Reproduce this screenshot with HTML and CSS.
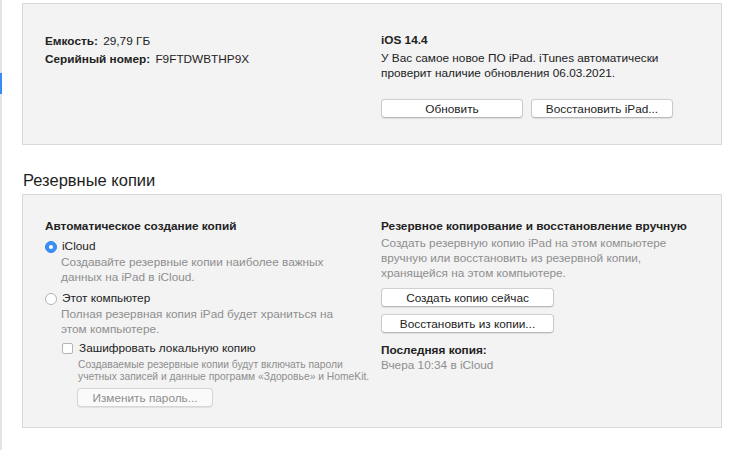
FILE: index.html
```html
<!DOCTYPE html>
<html lang="ru">
<head>
<meta charset="utf-8">
<link rel="stylesheet" href="styles.css">
</head>
<body>
<div class="app">
  <aside class="sidebar"><div class="sidebar-mark"></div></aside>
  <main class="main">
    <section class="panel panel-top">
      <div class="col col-left">
        <div class="kv"><b>Емкость:</b> 29,79 ГБ</div>
        <div class="kv"><b>Серийный номер:</b> F9FTDWBTHP9X</div>
      </div>
      <div class="col col-right">
        <div class="title">iOS 14.4</div>
        <p class="text">У Вас самое новое ПО iPad. iTunes автоматически проверит наличие обновления 06.03.2021.</p>
        <div class="btn-row">
          <button class="btn btn-wide">Обновить</button>
          <button class="btn btn-wide">Восстановить iPad...</button>
        </div>
      </div>
    </section>

    <h2 class="section-title">Резервные копии</h2>

    <section class="panel panel-backup">
      <div class="col col-left">
        <div class="title">Автоматическое создание копий</div>
        <label class="option">
          <span class="radio radio-on"></span><span>iCloud</span>
        </label>
        <p class="hint hint-indent">Создавайте резервные копии наиболее важных данных на iPad в iCloud.</p>
        <label class="option option-2">
          <span class="radio"></span><span>Этот компьютер</span>
        </label>
        <p class="hint hint-indent">Полная резервная копия iPad будет храниться на этом компьютере.</p>
        <label class="check">
          <span class="checkbox"></span><span>Зашифровать локальную копию</span>
        </label>
        <p class="small">Создаваемые резервные копии будут включать пароли<br>учетных записей и данные программ «Здоровье» и HomeKit.</p>
        <button class="btn btn-disabled">Изменить пароль...</button>
      </div>
      <div class="col col-right">
        <div class="title">Резервное копирование и восстановление вручную</div>
        <p class="hint hint-right">Создать резервную копию iPad на этом компьютере вручную или восстановить из резервной копии, хранящейся на этом компьютере.</p>
        <button class="btn btn-backup">Создать копию сейчас</button>
        <button class="btn btn-backup btn-second">Восстановить из копии...</button>
        <div class="title last-title">Последняя копия:</div>
        <div class="hint">Вчера 10:34 в iCloud</div>
      </div>
    </section>
  </main>
</div>
</body>
</html>
```

FILE: styles.css
```css
* { box-sizing: border-box; }
html, body {
  margin: 0;
  padding: 0;
  background: #ffffff;
}
body {
  font-family: "Liberation Sans", Arial, sans-serif;
  font-size: 11.8px;
  line-height: 15px;
  color: #222222;
  width: 740px;
  height: 450px;
  overflow: hidden;
}
.app {
  display: flex;
  height: 450px;
}
.sidebar {
  width: 2px;
  flex: 0 0 2px;
  background: #e6e2ea;
}
.sidebar-mark {
  margin-top: 73px;
  height: 21px;
  background: #3a8cf4;
}
.main {
  flex: 1;
  padding-left: 20px;
}
.panel {
  width: 700px;
  background: #f3f3f3;
  border: 1px solid #d8d8d8;
  display: grid;
  grid-template-columns: 336px 1fr;
  padding-left: 22px;
}
.panel-top {
  margin-top: 3px;
  height: 142px;
  padding-top: 29px;
}
.col { display: flex; flex-direction: column; align-items: flex-start; }
.kv {
  line-height: 17px;
  height: 17.5px;
  color: #222;
}
.kv b { font-weight: bold; margin-right: 2px; }
.title {
  font-weight: bold;
  color: #222;
}
.text {
  margin: 3px 0 0;
  width: 290px;
}
.btn-row {
  display: flex;
  gap: 8px;
  margin-top: 18px;
}
.btn {
  font-family: inherit;
  font-size: 11.8px;
  line-height: 16px;
  color: #222;
  background: #ffffff;
  border: 1px solid #c9c9c9;
  border-top-color: #d0d0d0;
  border-bottom-color: #b8b8b8;
  border-radius: 4px;
  height: 19px;
  padding: 0;
  box-shadow: 0 0.5px 1px rgba(0,0,0,0.08);
}
.btn-wide { width: 142px; }
.section-title {
  margin: 25px 0 0 1px;
  font-size: 16.5px;
  line-height: 20px;
  font-weight: normal;
  color: #1e1e1e;
  height: 20px;
}
.panel-backup {
  margin-top: 4px;
  height: 234px;
  padding-top: 24px;
}
.option {
  display: flex;
  align-items: center;
  gap: 5px;
  margin-top: 5px;
  height: 15px;
  color: #222;
}
.option-2 { margin-top: 6px; }
.radio {
  width: 12px;
  height: 12px;
  border-radius: 50%;
  background: #ffffff;
  border: 1px solid #b4b4b4;
  flex: 0 0 12px;
}
.radio-on {
  background: #3b8ef6;
  border-color: #3585ec;
  position: relative;
}
.radio-on::after {
  content: "";
  position: absolute;
  left: 3px;
  top: 3px;
  width: 4px;
  height: 4px;
  border-radius: 50%;
  background: #fff;
}
.hint {
  color: #8e8e8e;
  margin: 0;
}
.hint-indent {
  margin: 1px 0 0 16px;
  width: 290px;
}
.check {
  display: flex;
  align-items: center;
  gap: 6px;
  margin: 4px 0 0 17px;
  height: 15px;
  color: #222;
}
.checkbox {
  width: 11px;
  height: 11px;
  border: 1px solid #b4b4b4;
  border-radius: 2px;
  background: #fff;
  flex: 0 0 11px;
}
.small {
  font-size: 10.3px;
  line-height: 12px;
  color: #8e8e8e;
  margin: 3px 0 0 33px;
  width: 300px;
  white-space: nowrap;
}
.btn-disabled {
  width: 136px;
  margin: 5px 0 0 32px;
  color: #8e8e8e;
  background: #fafafa;
  border-color: #d6d6d6;
}
.hint-right {
  margin-top: 2px;
  width: 300px;
}
.btn-backup {
  width: 173px;
  margin-top: 7px;
}
.btn-second { margin-top: 7px; }
.last-title { margin-top: 10px; }
```
